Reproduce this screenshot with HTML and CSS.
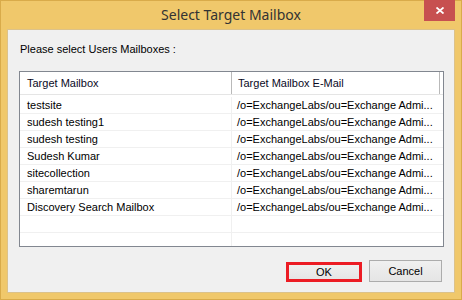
FILE: index.html
```html
<!DOCTYPE html>
<html lang="en">
<head>
    <meta charset="UTF-8">
    <title>Select Target Mailbox</title>
    <link rel="stylesheet" href="styles.css">
</head>
<body>

    <div class="window">
        <div class="titlebar">
            <span class="spacer"></span>
            <div class="title">Select Target Mailbox</div>
            <button class="close" title="Close">
                <svg width="8" height="7" viewBox="0 0 8 7">
                    <path d="M0.5 0.5 L7.5 6.5 M7.5 0.5 L0.5 6.5" stroke="#fff" stroke-width="1.8" fill="none"/>
                </svg>
            </button>
        </div>

        <div class="client">
            <p class="prompt">Please select Users Mailboxes :</p>

            <div class="listview">
                <div class="lv-header">
                    <div class="col col-name">Target Mailbox</div>
                    <div class="col col-mail">Target Mailbox E-Mail</div>
                </div>
                <div class="lv-body">
                    <div class="row"><div class="col col-name">testsite</div><div class="col col-mail">/o=ExchangeLabs/ou=Exchange Admi...</div></div>
                    <div class="row"><div class="col col-name">sudesh testing1</div><div class="col col-mail">/o=ExchangeLabs/ou=Exchange Admi...</div></div>
                    <div class="row"><div class="col col-name">sudesh testing</div><div class="col col-mail">/o=ExchangeLabs/ou=Exchange Admi...</div></div>
                    <div class="row"><div class="col col-name">Sudesh Kumar</div><div class="col col-mail">/o=ExchangeLabs/ou=Exchange Admi...</div></div>
                    <div class="row"><div class="col col-name">sitecollection</div><div class="col col-mail">/o=ExchangeLabs/ou=Exchange Admi...</div></div>
                    <div class="row"><div class="col col-name">sharemtarun</div><div class="col col-mail">/o=ExchangeLabs/ou=Exchange Admi...</div></div>
                    <div class="row"><div class="col col-name">Discovery Search Mailbox</div><div class="col col-mail">/o=ExchangeLabs/ou=Exchange Admi...</div></div>
                    <div class="row"><div class="col col-name"></div><div class="col col-mail"></div></div>
                    <div class="row"><div class="col col-name"></div><div class="col col-mail"></div></div>
                </div>
            </div>

            <div class="actions">
                <button class="btn btn-ok">OK</button>
                <button class="btn">Cancel</button>
            </div>
        </div>
    </div>

</body>
</html>
```

FILE: styles.css
```css
body {
    margin: 0;
    font-family: "Liberation Sans", Arial, sans-serif;
    font-size: 11px;
    color: #000;
}
.window {
    width: 462px;
    height: 300px;
    box-sizing: border-box;
    border: 1px solid #d9ab4a;
    background-color: #f0c86b;
    display: flex;
    flex-direction: column;
}
.titlebar {
    height: 28px;
    display: flex;
    align-items: flex-start;
    padding: 0 6px;
}
.spacer {
    width: 31px;
}
.title {
    flex: 1;
    text-align: center;
    font-family: "Noto Sans", "Open Sans", sans-serif;
    font-size: 14px;
    line-height: 28px;
    color: #333;
}
.close {
    width: 31px;
    height: 21px;
    margin-top: -1px;
    padding: 0;
    border: none;
    background-color: #c75050;
    display: flex;
    align-items: center;
    justify-content: center;
}
.client {
    margin: 0 6px 6px;
    height: 264px;
    box-sizing: border-box;
    border: 1px solid #dcc28a;
    background-color: #f0f0f0;
    display: flex;
    flex-direction: column;
}
.prompt {
    margin: 13px 0 0 12px;
    line-height: 13px;
}
.listview {
    margin: 15px 0 0 11px;
    width: 425px;
    height: 176px;
    box-sizing: border-box;
    border: 1px solid #828790;
    background-color: #fff;
    overflow: hidden;
}
.lv-header {
    display: flex;
    height: 23px;
    box-sizing: border-box;
    border-bottom: 1px solid #e5e5e5;
}
.lv-header .col {
    line-height: 22px;
    border-right: 1px solid #b9b9b9;
    color: #0a0a1e;
}
.col {
    box-sizing: border-box;
    white-space: nowrap;
    overflow: hidden;
}
.col-name {
    width: 212px;
    padding-left: 7px;
}
.col-mail {
    width: 208px;
    padding-left: 5px;
}
.lv-header .col-mail {
    padding-left: 6px;
}
.lv-body {
    height: 151px;
    overflow: hidden;
}
.row {
    display: flex;
    height: 17px;
    box-sizing: border-box;
    border-bottom: 1px solid #f0f0f0;
}
.row:first-child {
    height: 19px;
    padding-top: 2px;
}
.row .col {
    line-height: 16px;
}
.row .col-name {
    border-right: 1px solid #f0f0f0;
}
.actions {
    display: flex;
    justify-content: flex-end;
    align-items: flex-end;
    gap: 7px;
    margin-top: 13px;
    padding-right: 12px;
}
.btn {
    width: 73px;
    height: 22px;
    padding: 0;
    border: 1px solid #acacac;
    background: linear-gradient(#f0f0f0, #e5e5e5);
    font-family: "Liberation Sans", Arial, sans-serif;
    font-size: 11px;
    color: #000;
}
.btn-ok {
    width: 76px;
    height: 20px;
    border: 3px solid #ec1c24;
}
```
